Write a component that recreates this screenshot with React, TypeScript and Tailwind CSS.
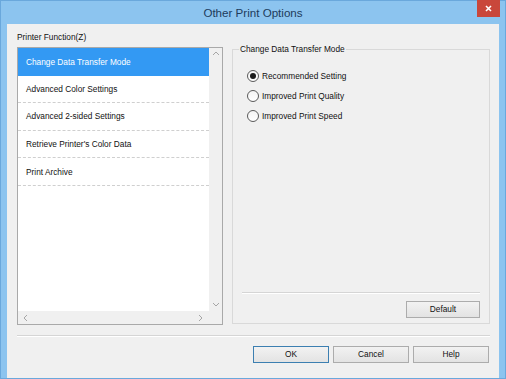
import React from 'react';

const FONT = { fontFamily: '"Liberation Sans", Arial, sans-serif' };

const functions = [
  'Change Data Transfer Mode',
  'Advanced Color Settings',
  'Advanced 2-sided Settings',
  "Retrieve Printer's Color Data",
  'Print Archive',
];

const modes = ['Recommended Setting', 'Improved Print Quality', 'Improved Print Speed'];

function Chevron({ dir }: { dir: 'up' | 'down' | 'left' | 'right' }) {
  const points = {
    up: '1,5 4,2 7,5',
    down: '1,2 4,5 7,2',
    left: '5,1 2,4 5,7',
    right: '2,1 5,4 2,7',
  }[dir];
  return (
    <svg width="8" height="8" viewBox="0 0 8 8">
      <polyline points={points} fill="none" stroke="#a6a6a6" strokeWidth="1" />
    </svg>
  );
}

function Radio({ label, checked }: { label: string; checked?: boolean }) {
  return (
    <div className="flex h-[20px] items-center gap-[3px]">
      <span className="flex h-[12px] w-[12px] items-center justify-center rounded-full border border-[#5a5a5a] bg-gradient-to-b from-[#f4f4f4] to-white">
        {checked && <span className="h-[6px] w-[6px] rounded-full bg-[#1a1a1a]" />}
      </span>
      <span className="text-[8.3px] leading-none text-[#111]">{label}</span>
    </div>
  );
}

function Button({ label, primary }: { label: string; primary?: boolean }) {
  return (
    <button
      className={
        'flex h-[17px] w-[76px] items-center justify-center border bg-gradient-to-b from-[#f2f2f2] to-[#e3e3e3] text-[8.3px] leading-none text-[#111] ' +
        (primary ? 'border-[#3c7fb1]' : 'border-[#acacac]')
      }
    >
      {label}
    </button>
  );
}

export default function App() {
  return (
    <div
      style={FONT}
      className="flex h-[379px] w-[506px] flex-col border border-[#6aa8dc] bg-[#8cc4ef]"
    >
      {/* title bar */}
      <div className="relative flex h-[23px] shrink-0 items-center justify-center">
        <span className="text-[11.6px] leading-none text-[#1d3b5c]">Other Print Options</span>
        <div className="absolute right-[5px] -top-[1px] flex h-[17px] w-[23px] items-center justify-center bg-[#c9473b]">
          <svg width="7" height="7" viewBox="0 0 7 7">
            <path d="M1 1L6 6M6 1L1 6" stroke="#fff" strokeWidth="1.6" />
          </svg>
        </div>
      </div>

      {/* client area */}
      <div className="mx-[6px] flex flex-1 flex-col bg-[#f0f0f0] pl-[10px] pr-[9px] pt-[6px] pb-[7px]">
        <div className="h-[14px] text-[8.3px] leading-[14px] text-[#111]">Printer Function(Z)</div>

        <div className="mt-[3px] flex gap-[9px]">
          {/* list box */}
          <div className="flex h-[278px] w-[206px] flex-col border border-[#a9a9a9] bg-white">
            <div className="flex flex-1">
              <ul className="flex-1">
                {functions.map((f, i) => (
                  <li
                    key={f}
                    className={
                      'flex h-[27.6px] items-center pl-[8px] text-[8.3px] leading-none ' +
                      (i === 0
                        ? 'bg-[#3399f3] text-white'
                        : 'border-b border-dashed border-[#cfcfcf] text-[#111]')
                    }
                  >
                    {f}
                  </li>
                ))}
              </ul>
              <div className="flex w-[13px] flex-col items-center justify-between bg-[#f0f0f0] py-[2px]">
                <Chevron dir="up" />
                <Chevron dir="down" />
              </div>
            </div>
            <div className="flex h-[13px]">
              <div className="flex flex-1 items-center justify-between bg-[#f0f0f0] px-[4px]">
                <Chevron dir="left" />
                <Chevron dir="right" />
              </div>
              <div className="w-[13px] bg-[#f0f0f0]" />
            </div>
          </div>

          {/* group box */}
          <div className="relative mt-[2px] flex h-[275px] flex-1 flex-col border border-[#d9d9d9] px-[9px] pb-[5px] pt-[16px]">
            <span className="absolute -top-[6px] left-[6px] bg-[#f0f0f0] px-[1px] text-[8.3px] leading-[11px] text-[#111]">
              Change Data Transfer Mode
            </span>
            <div className="pl-[5px]">
              {modes.map((m, i) => (
                <Radio key={m} label={m} checked={i === 0} />
              ))}
            </div>
            <div className="flex-1" />
            <div className="h-[2px] border-t border-[#d5d5d5] bg-white" />
            <div className="mt-[7px] flex justify-end">
              <button className="flex h-[17px] w-[74px] items-center justify-center border border-[#acacac] bg-gradient-to-b from-[#f2f2f2] to-[#e3e3e3] text-[8.3px] leading-none text-[#111]">
                Default
              </button>
            </div>
          </div>
        </div>

        <div className="mt-[10px] h-[2px] border-t border-[#d5d5d5] bg-white" />

        <div className="mt-[9px] flex justify-end gap-[4px] pr-[1px]">
          <Button label="OK" primary />
          <Button label="Cancel" />
          <Button label="Help" />
        </div>
      </div>
    </div>
  );
}
